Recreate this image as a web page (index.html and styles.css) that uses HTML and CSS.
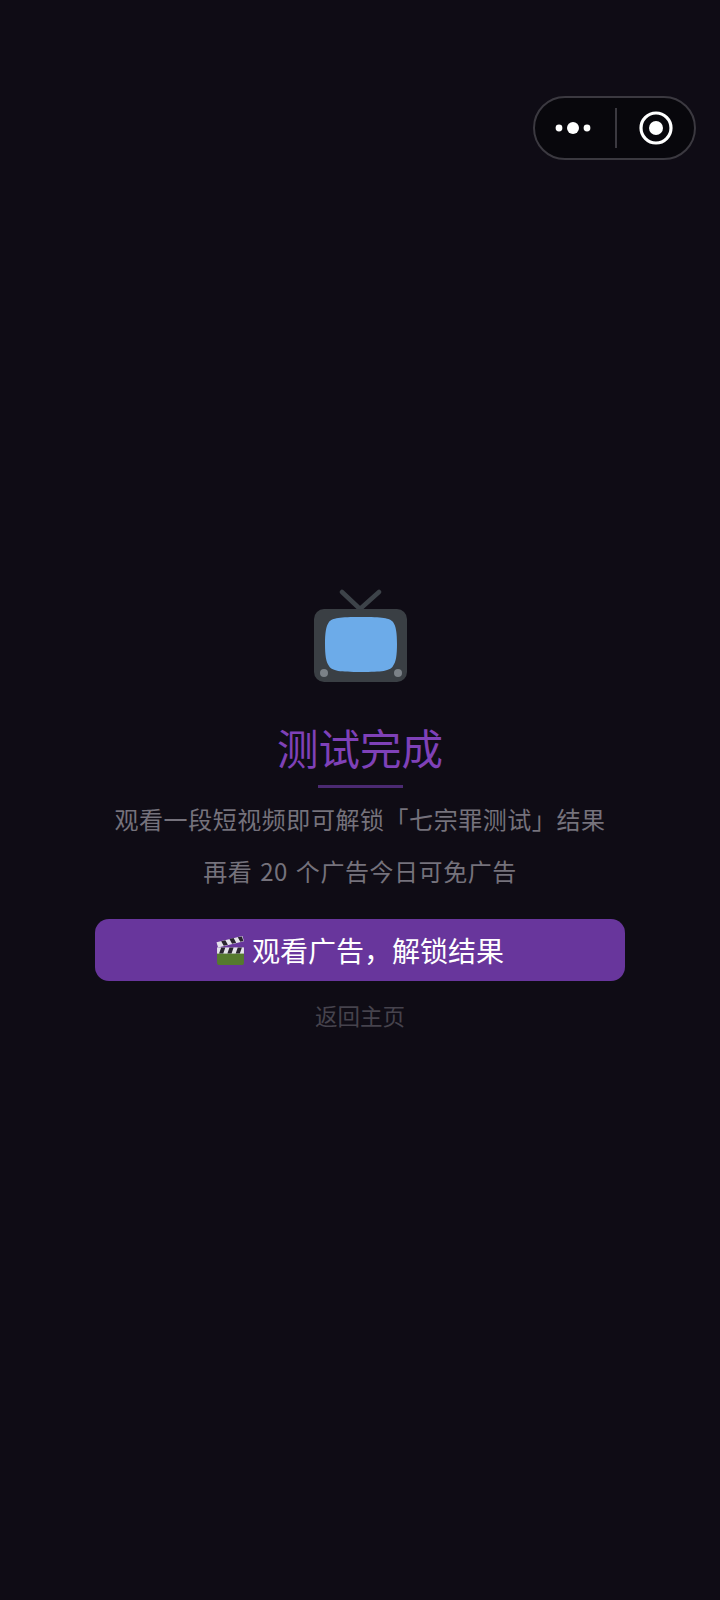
FILE: index.html
```html
<!DOCTYPE html>
<html lang="zh-CN">
<head>
  <meta charset="UTF-8">
  <meta name="viewport" content="width=device-width, initial-scale=1.0">
  <title>测试完成</title>
  <link rel="stylesheet" href="styles.css">
</head>
<body>
  <div class="capsule">
    <div class="capsule-part capsule-more">
      <svg width="36" height="14" viewBox="0 0 36 14">
        <circle cx="4" cy="7" r="3.4" fill="#fff"/>
        <circle cx="18" cy="7" r="6" fill="#fff"/>
        <circle cx="32" cy="7" r="3.4" fill="#fff"/>
      </svg>
    </div>
    <div class="capsule-line"></div>
    <div class="capsule-part capsule-close">
      <svg width="34" height="34" viewBox="0 0 34 34">
        <circle cx="17" cy="17" r="15" fill="none" stroke="#fff" stroke-width="3.2"/>
        <circle cx="17" cy="17" r="7" fill="#fff"/>
      </svg>
    </div>
  </div>

  <div class="container">
    <svg class="tv" width="94" height="94" viewBox="0 0 94 94">
      <path d="M28 3 L46 20 L65 3" fill="none" stroke="#3d4349" stroke-width="4.5" stroke-linecap="round" stroke-linejoin="round"/>
      <rect x="0" y="20" width="93" height="73" rx="10" fill="#3a3f44"/>
      <path d="M47 28 C68 28 76 29 79 33 C82 37 83 44 83 55 C83 66 82 73 79 77 C76 82 68 83 47 83 C26 83 18 82 15 77 C12 73 11 66 11 55 C11 44 12 37 15 33 C18 29 26 28 47 28 Z" fill="#6cabe9"/>
      <circle cx="10" cy="84" r="4" fill="#7b8187"/>
      <circle cx="84" cy="84" r="4" fill="#7b8187"/>
    </svg>
    <h1 class="title">测试完成</h1>
    <div class="title-line"></div>
    <p class="desc">观看一段短视频即可解锁「七宗罪测试」结果</p>
    <p class="desc desc-second">再看 20 个广告今日可免广告</p>
    <button type="button" class="watch-btn">
      <svg class="clapper" width="29" height="29" viewBox="0 0 28 28">
        <rect x="1" y="14" width="26" height="14" rx="2.5" fill="#557a2e"/>
        <rect x="1" y="11" width="26" height="6" fill="#e4e2ea"/>
        <path d="M5 11 L9 11 L7 17 L3 17 Z M13 11 L17 11 L15 17 L11 17 Z M21 11 L25 11 L23 17 L19 17 Z" fill="#2a2530"/>
        <path d="M0.5 6 L25.5 0 L27 5 L2 11 Z" fill="#e4e2ea"/>
        <path d="M5 5 L9 4 L11.5 8.5 L7.5 9.5 Z M13 3 L17 2 L19.5 6.5 L15.5 7.5 Z M21 1.2 L25 0.4 L26.5 4.8 L23.5 5.5 Z" fill="#2a2530"/>
      </svg>
      <span>观看广告，解锁结果</span>
    </button>
    <a class="back-link">返回主页</a>
  </div>
</body>
</html>
```

FILE: styles.css
```css
body {
  font-family: "Noto Sans CJK SC", "Noto Sans", sans-serif;
  margin: 0;
  padding: 0;
  background: #0f0c15;
  height: 1600px;
  overflow: hidden;
  position: relative;
}
.capsule {
  position: absolute;
  top: 96px;
  left: 533px;
  width: 163px;
  height: 64px;
  box-sizing: border-box;
  display: flex;
  align-items: center;
  background: #08070c;
  border: 2.5px solid #3b3940;
  border-radius: 32px;
}
.capsule-part {
  flex: 1 1 0;
  box-sizing: border-box;
  display: flex;
  justify-content: center;
  align-items: center;
}
.capsule-more {
  padding-right: 4px;
}
.capsule-close {
  padding-left: 2px;
}
.capsule-line {
  width: 2px;
  height: 40px;
  background: #3b3940;
}
.container {
  padding: 589px 95px 0;
  display: flex;
  flex-direction: column;
  align-items: center;
  text-align: center;
}
.tv {
  margin-left: 1px;
  display: block;
}
.title {
  margin: 35px 0 0;
  font-size: 41.5px;
  line-height: 58px;
  font-weight: 400;
  color: #7f41b8;
}
.title-line {
  width: 85px;
  height: 3px;
  margin-top: 9px;
  background: #4b2a72;
}
.desc {
  margin: 13px 0 0;
  font-size: 24px;
  line-height: 36px;
  letter-spacing: 0.55px;
  font-weight: 400;
  color: #75727c;
  white-space: nowrap;
}
.desc-second {
  margin-top: 16px;
  word-spacing: 2px;
}
.watch-btn {
  width: 530px;
  height: 62px;
  margin-top: 30px;
  display: flex;
  justify-content: center;
  align-items: center;
  gap: 7px;
  font-family: inherit;
  font-size: 28px;
  font-weight: 400;
  color: #fff;
  background: #68369c;
  border: none;
  border-radius: 14px;
}
.back-link {
  margin-top: 17px;
  font-size: 22.5px;
  line-height: 34px;
  font-weight: 400;
  color: #46434d;
}
```
